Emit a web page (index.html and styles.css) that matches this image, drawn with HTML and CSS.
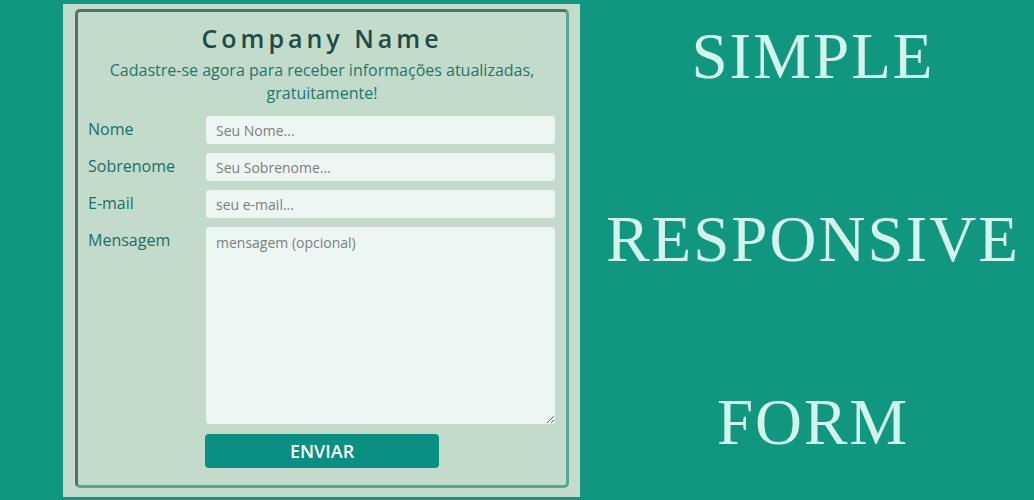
FILE: index.html
```html
<!DOCTYPE html>
<html lang="pt">
<head>
<meta charset="utf-8">
<title>Simple Responsive Form</title>
<link rel="stylesheet" href="styles.css">
</head>
<body>
<div class="page">
  <div class="panel">
    <form class="card">
      <h1 class="title">Company Name</h1>
      <p class="subtitle">Cadastre-se agora para receber informações atualizadas, gratuitamente!</p>
      <div class="row">
        <label class="label" for="nome">Nome</label>
        <input class="field" id="nome" type="text" placeholder="Seu Nome...">
      </div>
      <div class="row">
        <label class="label" for="sobrenome">Sobrenome</label>
        <input class="field" id="sobrenome" type="text" placeholder="Seu Sobrenome...">
      </div>
      <div class="row">
        <label class="label" for="email">E-mail</label>
        <input class="field" id="email" type="email" placeholder="seu e-mail...">
      </div>
      <div class="row">
        <label class="label" for="msg">Mensagem</label>
        <textarea class="field area" id="msg" placeholder="mensagem (opcional)"></textarea>
      </div>
      <div class="row">
        <span class="label"></span>
        <button class="send" type="button">ENVIAR</button>
      </div>
    </form>
  </div>
  <div class="side">
    <div class="word">SIMPLE</div>
    <div class="word">RESPONSIVE</div>
    <div class="word">FORM</div>
  </div>
</div>
</body>
</html>
```
FILE: styles.css
```css
* { box-sizing: border-box; }
html, body { margin: 0; padding: 0; }
body {
  background: #11967f;
  font-family: "Open Sans", "Liberation Sans", sans-serif;
  width: 1034px;
  height: 500px;
  overflow: hidden;
}
.page {
  display: flex;
  align-items: flex-start;
}
.panel {
  margin-left: 63px;
  margin-top: 4px;
  width: 517px;
  height: 493px;
  background: #c3dbcb;
  padding: 5px 11px 9px 12px;
}
.card {
  height: 479px;
  border: 3px solid;
  border-color: #4c7568 #55a894 #55a894 #4c7568;
  border-radius: 5px;
  padding: 11px 10px 0 10px;
  display: flex;
  flex-direction: column;
}
.title {
  margin: 0;
  text-align: center;
  font-size: 25px;
  line-height: 30px;
  font-weight: 600;
  letter-spacing: 4px;
  color: #1e4c45;
}
.subtitle {
  margin: 6px 0 10px;
  text-align: center;
  font-size: 16px;
  line-height: 23px;
  color: #1b7770;
}
.row {
  display: flex;
  margin-bottom: 7px;
}
.label {
  width: 117px;
  flex: none;
  font-size: 16px;
  line-height: 22px;
  padding-top: 3px;
  color: #1a6f67;
}
.field {
  width: 351px;
  height: 30px;
  border: 1px solid #cbd3cf;
  border-radius: 4px;
  background: #ecf7f3;
  padding: 0 10px;
  font-family: "Open Sans", "Liberation Sans", sans-serif;
  font-size: 14px;
  color: #333;
}
.field::placeholder { color: #7a7f7d; opacity: 1; }
.area {
  height: 199px;
  padding: 6px 10px;
  resize: vertical;
  line-height: 20px;
}
.row:last-child { margin-top: 2px; }
.send {
  width: 234px;
  height: 34px;
  border: none;
  border-radius: 4px;
  background: #0a8f82;
  color: #ffffff;
  font-family: "Open Sans", "Liberation Sans", sans-serif;
  font-size: 18px;
  font-weight: 600;
  padding: 0;
}
.side {
  flex: 1;
  display: flex;
  flex-direction: column;
  align-items: center;
  padding-top: 24px;
  padding-left: 12px;
  gap: 119px;
}
.word {
  font-family: "Liberation Serif", "Times New Roman", serif;
  font-size: 65px;
  line-height: 64px;
  letter-spacing: 2px;
  color: #d2f4ec;
}
```
